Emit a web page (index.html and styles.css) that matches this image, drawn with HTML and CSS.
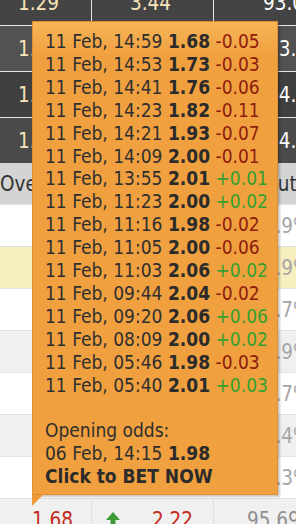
FILE: index.html
```html
<!DOCTYPE html>
<html>
<head>
<meta charset="utf-8">
<link rel="stylesheet" href="styles.css">
</head>
<body>
<div class="page">
  <div class="odds-table">
    <div class="row dark d0">
      <div class="cell c1 cream">1.29</div>
      <div class="cell c2 cream">3.44</div>
      <div class="cell c3 pay">93.0%</div>
    </div>
    <div class="row dark d1">
      <div class="cell c1 cream">1.50</div>
      <div class="cell c2 cream">2.51</div>
      <div class="cell c3 pay shift">93.7%</div>
    </div>
    <div class="row dark d2">
      <div class="cell c1 cream">1.62</div>
      <div class="cell c2 cream">2.30</div>
      <div class="cell c3 pay shift">94.1%</div>
    </div>
    <div class="row dark d3">
      <div class="cell c1 cream">1.75</div>
      <div class="cell c2 cream">2.10</div>
      <div class="cell c3 pay shift">94.0%</div>
    </div>
    <div class="row head">
      <div class="cell c1 hd">Over/Under</div>
      <div class="cell c2 hd">Over</div>
      <div class="cell c3 hd hpay">Payout</div>
    </div>
    <div class="row light white">
      <div class="cell c1"></div><div class="cell c2"></div><div class="cell c3 pct">95.9%</div>
    </div>
    <div class="row light yellow">
      <div class="cell c1"></div><div class="cell c2"></div><div class="cell c3 pct">96.9%</div>
    </div>
    <div class="row light white">
      <div class="cell c1"></div><div class="cell c2"></div><div class="cell c3 pct">95.7%</div>
    </div>
    <div class="row light grey">
      <div class="cell c1"></div><div class="cell c2"></div><div class="cell c3 pct">95.9%</div>
    </div>
    <div class="row light white">
      <div class="cell c1"></div><div class="cell c2"></div><div class="cell c3 pct">95.7%</div>
    </div>
    <div class="row light grey">
      <div class="cell c1"></div><div class="cell c2"></div><div class="cell c3 pct">94.4%</div>
    </div>
    <div class="row light white">
      <div class="cell c1"></div><div class="cell c2"></div><div class="cell c3 pct">95.3%</div>
    </div>
    <div class="row light grey last">
      <div class="cell c1 odd-red">1.68</div>
      <div class="cell c2">
        <svg class="arrow" width="14" height="16" viewBox="0 0 14 16"><path d="M7 0 L14 8 H9.5 V16 H4.5 V8 H0 Z" fill="#3e9b37"/></svg>
        <span class="odd-red second">2.22</span>
      </div>
      <div class="cell c3 pct dim">95.69%</div>
    </div>
  </div>

  <div class="tooltip">
    <div class="ln">11 Feb, 14:59 <b>1.68</b> <span class="neg">-0.05</span></div>
    <div class="ln">11 Feb, 14:53 <b>1.73</b> <span class="neg">-0.03</span></div>
    <div class="ln">11 Feb, 14:41 <b>1.76</b> <span class="neg">-0.06</span></div>
    <div class="ln">11 Feb, 14:23 <b>1.82</b> <span class="neg">-0.11</span></div>
    <div class="ln">11 Feb, 14:21 <b>1.93</b> <span class="neg">-0.07</span></div>
    <div class="ln">11 Feb, 14:09 <b>2.00</b> <span class="neg">-0.01</span></div>
    <div class="ln">11 Feb, 13:55 <b>2.01</b> <span class="pos">+0.01</span></div>
    <div class="ln">11 Feb, 11:23 <b>2.00</b> <span class="pos">+0.02</span></div>
    <div class="ln">11 Feb, 11:16 <b>1.98</b> <span class="neg">-0.02</span></div>
    <div class="ln">11 Feb, 11:05 <b>2.00</b> <span class="neg">-0.06</span></div>
    <div class="ln">11 Feb, 11:03 <b>2.06</b> <span class="pos">+0.02</span></div>
    <div class="ln">11 Feb, 09:44 <b>2.04</b> <span class="neg">-0.02</span></div>
    <div class="ln">11 Feb, 09:20 <b>2.06</b> <span class="pos">+0.06</span></div>
    <div class="ln">11 Feb, 08:09 <b>2.00</b> <span class="pos">+0.02</span></div>
    <div class="ln">11 Feb, 05:46 <b>1.98</b> <span class="neg">-0.03</span></div>
    <div class="ln">11 Feb, 05:40 <b>2.01</b> <span class="pos">+0.03</span></div>
    <div class="opening">
      <div class="ln">Opening odds:</div>
      <div class="ln">06 Feb, 14:15 <b>1.98</b></div>
      <div class="ln"><b>Click to BET NOW</b></div>
    </div>
  </div>
</div>
</body>
</html>
```
FILE: styles.css
```css
html, body {
  margin: 0;
  padding: 0;
  background: #ffffff;
}
.page {
  position: relative;
  width: 296px;
  height: 524px;
  overflow: hidden;
  font-family: "DejaVu Sans Condensed", "DejaVu Sans", sans-serif;
}
.odds-table {
  margin-top: -20px;
  font-size: 20.5px;
}
.row {
  display: grid;
  grid-template-columns: 92px 122px 1fr;
  box-sizing: border-box;
}
.cell {
  display: flex;
  align-items: center;
  white-space: nowrap;
  overflow: hidden;
  box-sizing: border-box;
}
.dark {
  height: 46px;
  border-bottom: 1px solid #e6e6e6;
}
.d0 { background: #444444; }
.d1 { background: #525252; }
.d2 { background: #3f3f3f; }
.d3 { background: #4a4a4a; border-bottom: none; height: 45px; }
.dark .c1, .dark .c2 { border-right: 1px solid #e6e6e6; }
.dark .c1 { padding-left: 18px; }
.dark .c2 { padding-left: 38px; }
.dark .c3 { padding-left: 49px; }
.dark .c3.shift { padding-left: 53px; }
.cream { color: #fbe4ba; }
.pay { color: #ffffff; }
.head {
  height: 41px;
  background: #d4d4d4;
}
.hd { color: #333333; }
.head .c1 { padding-left: 0; }
.head .c3 { padding-left: 20px; }
.light {
  height: 42px;
  border-top: 1px solid #e2e2e2;
}
.white { background: #ffffff; }
.yellow { background: #f8efbf; }
.grey { background: #f0f0f0; }
.light .c3 { padding-left: 38px; }
.pct { color: #a6a6a6; }
.pct.dim { color: #8f8f8f; }
.last .c1, .last .c2 { border-right: 1px solid #dedede; }
.last .c1 { padding-left: 32px; }
.last .c2 { padding-left: 14px; }
.last .c3 { padding-left: 33px; }
.odd-red { color: #c32b20; }
.arrow { flex: none; }
.second { margin-left: 32px; }

.tooltip {
  position: absolute;
  left: 32px;
  top: 21px;
  width: 246px;
  height: 474px;
  box-sizing: border-box;
  padding: 8px 0 0 12px;
  background: linear-gradient(#f6b556 0px, #f1a040 34px, #f0a03e 100%);
  border: 1px solid #e28f33;
  box-shadow: 2px 2px 2px rgba(0, 0, 0, 0.22);
  color: #2f2f2f;
  font-size: 19px;
  line-height: 22.9px;
  white-space: nowrap;
}
.tooltip::after {
  content: "";
  position: absolute;
  left: -1px;
  top: 100%;
  margin-top: 1px;
  border-top: 11px solid #ec9a3a;
  border-right: 11px solid transparent;
}
.tooltip b { font-weight: bold; color: #2b2b2b; }
.neg { color: #8e1c0d; }
.pos { color: #35a02e; }
.opening { margin-top: 22.9px; }
```
